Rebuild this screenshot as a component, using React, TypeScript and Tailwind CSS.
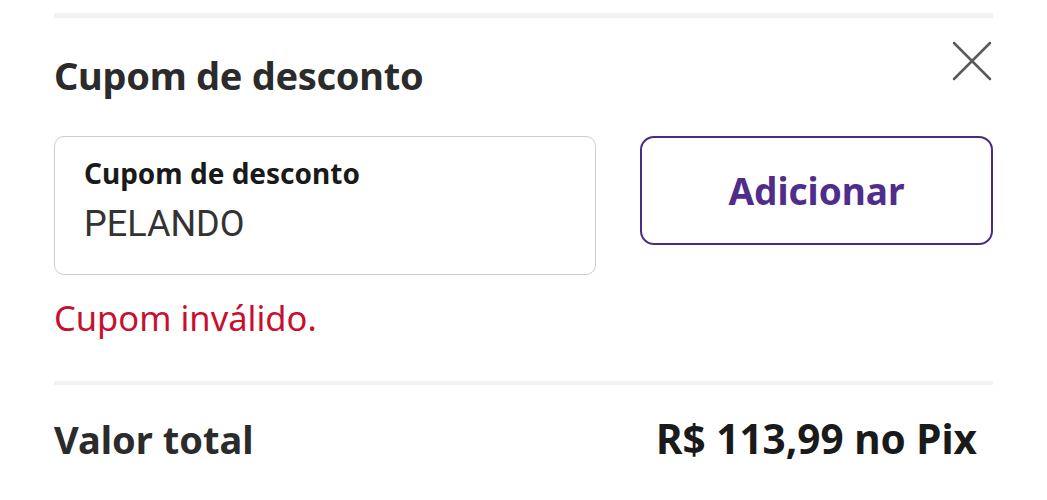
import React from 'react';

function CloseIcon() {
  return (
    <svg width="40" height="40" viewBox="0 0 40 40" fill="none" stroke="#5a5a5a" strokeWidth="2.5" strokeLinecap="round">
      <path d="M2 2L38 38M38 2L2 38" />
    </svg>
  );
}

export default function App() {
  return (
    <div className="w-[1047px] h-[500px] bg-white px-[54px] pt-[13px] overflow-hidden font-['Noto_Sans',sans-serif]">
      <div className="h-[5px] bg-[#f2f2f2]" />

      {/* Header */}
      <div className="flex items-start justify-between mt-[31px]">
        <h2 className="text-[38px] leading-[52px] font-bold text-[#2b2b2b] tracking-[-0.3px]">Cupom de desconto</h2>
        <button className="mt-[-8px] mr-[1px]">
          <CloseIcon />
        </button>
      </div>

      {/* Coupon form */}
      <div className="flex gap-[44px] mt-[35px]">
        <div className="w-[542px] h-[139px] border border-[#cccccc] rounded-[10px] px-[29px] pt-[18px]">
          <div className="text-[28px] leading-[36px] font-bold text-[#1a1a1a]">Cupom de desconto</div>
          <div className="text-[36px] leading-[42px] mt-[12px] text-[#333333] font-['Roboto',sans-serif]">PELANDO</div>
        </div>
        <button className="flex-1 h-[109px] border-2 border-[#4b2a85] rounded-[14px] flex items-center justify-center">
          <span className="text-[37px] font-bold text-[#4f2d8a] leading-none">Adicionar</span>
        </button>
      </div>

      <p className="mt-[20px] text-[34.5px] leading-[46px] text-[#c8102e]">Cupom inválido.</p>

      <div className="h-[4px] bg-[#f2f2f2] mt-[40px]" />

      {/* Total */}
      <div className="flex items-center justify-between mt-[29px] pr-[16px]">
        <span className="text-[38px] leading-[50px] font-bold text-[#2b2b2b]">Valor total</span>
        <span className="text-[40.5px] leading-[50px] font-bold text-[#1a1a1a]">R$ 113,99 no Pix</span>
      </div>
    </div>
  );
}
